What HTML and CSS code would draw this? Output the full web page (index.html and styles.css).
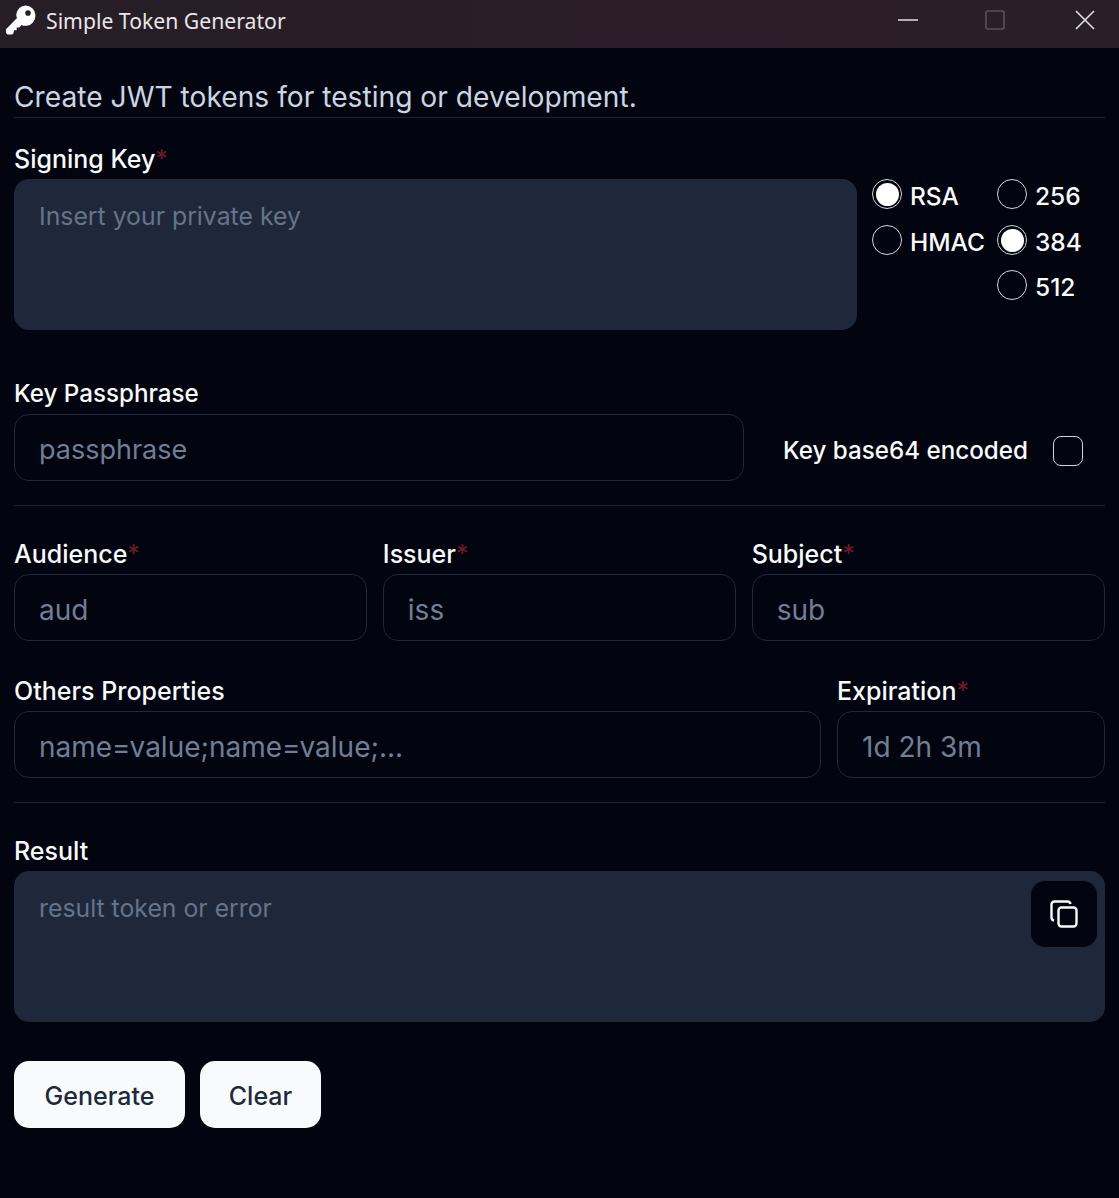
FILE: index.html
```html
<!DOCTYPE html>
<html lang="en">
<head>
<meta charset="utf-8">
<title>Simple Token Generator</title>
<link rel="stylesheet" href="styles.css">
</head>
<body>
<header class="titlebar">
  <svg class="app-icon" viewBox="0 0 32 32" aria-hidden="true">
    <path class="key" fill-rule="evenodd" d="M20.5 1.5a10.2 10.2 0 0 1 1.2 20.3c-2 .2-3.7 0-5.2-.8l-2.2 2.4h-2.6v2.8H9l-.6 3.2-1.3 1.1H2.6L1 28.9v-3.6l11-11.2c-.7-1.6-.9-3.200-.4-5A10 10 0 0 1 20.500 1.500zM23 6.200a2.800 2.800 0 1 0 0 5.600 2.800 2.800 0 0 0 0-5.600z"/>
  </svg>
  <span class="app-title">Simple Token Generator</span>
  <div class="window-controls">
    <svg class="ctl ctl-min" viewBox="0 0 20 20" aria-hidden="true"><path d="M0 10h20"/></svg>
    <svg class="ctl ctl-max" viewBox="0 0 20 20" aria-hidden="true"><rect x="1" y="1" width="18" height="18" rx="2"/></svg>
    <svg class="ctl ctl-close" viewBox="0 0 20 20" aria-hidden="true"><path d="M1 1l18 18M19 1L1 19"/></svg>
  </div>
</header>

<main class="content">
  <h1 class="lead">Create JWT tokens for testing or development.</h1>
  <hr class="rule rule-top">

  <section class="key-row">
    <div class="key-field">
      <label class="label">Signing Key<span class="req">*</span></label>
      <textarea class="area" placeholder="Insert your private key"></textarea>
    </div>
    <div class="algo">
      <label class="opt"><input type="radio" name="alg" checked><span>RSA</span></label>
      <label class="opt"><input type="radio" name="bits"><span>256</span></label>
      <label class="opt"><input type="radio" name="alg"><span>HMAC</span></label>
      <label class="opt"><input type="radio" name="bits" checked><span>384</span></label>
      <i></i>
      <label class="opt"><input type="radio" name="bits"><span>512</span></label>
    </div>
  </section>

  <section class="pass-row">
    <div class="pass-field">
      <label class="label label-tight">Key Passphrase</label>
      <input class="field field-tight" placeholder="passphrase">
    </div>
    <label class="b64"><span>Key base64 encoded</span><input type="checkbox"></label>
  </section>
  <hr class="rule rule-mid">

  <section class="three">
    <div><label class="label">Audience<span class="req">*</span></label><input class="field" placeholder="aud"></div>
    <div><label class="label">Issuer<span class="req">*</span></label><input class="field" placeholder="iss"></div>
    <div><label class="label">Subject<span class="req">*</span></label><input class="field" placeholder="sub"></div>
  </section>

  <section class="props">
    <div><label class="label">Others Properties</label><input class="field" placeholder="name=value;name=value;..."></div>
    <div><label class="label">Expiration<span class="req">*</span></label><input class="field" placeholder="1d 2h 3m"></div>
  </section>
  <hr class="rule rule-mid">

  <section class="result">
    <label class="label">Result</label>
    <div class="result-box">
      <textarea class="area" placeholder="result token or error"></textarea>
      <button class="copy" type="button" aria-label="Copy">
        <svg viewBox="0 0 28 28" aria-hidden="true">
          <rect x="8.500" y="7.500" width="18" height="19" rx="3"/>
          <path d="M4 20.500a3 3 0 0 1-2.500-3V4.500a3 3 0 0 1 3-3h13a3 3 0 0 1 3 2.500"/>
        </svg>
      </button>
    </div>
  </section>

  <div class="actions">
    <button class="btn btn-gen" type="button">Generate</button>
    <button class="btn btn-clear" type="button">Clear</button>
  </div>
</main>
</body>
</html>
```

FILE: styles.css
```css
* { box-sizing: border-box; }
html, body { margin: 0; height: 100%; }
body {
  background: #02040f;
  color: #f8fafc;
  font-family: Inter, "Noto Sans", sans-serif;
  overflow: hidden;
}
.titlebar {
  height: 48px;
  display: flex;
  align-items: center;
  background: linear-gradient(90deg, #261d25, #2b1e2a 60%, #2a1e28);
  padding: 0 0 8px 5px;
}
.app-icon { width: 32px; height: 32px; flex: none; }
.key { fill: #fff; }
.app-title {
  font-family: "Noto Sans", "Open Sans", sans-serif;
  font-size: 21.200px;
  color: #e8e6e8;
  margin-left: 9px;
  white-space: nowrap;
}
.window-controls { margin-left: auto; display: flex; align-items: center; }
.ctl { fill: none; stroke-width: 1.600; width: 20px; height: 20px; overflow: visible; }
.ctl-min { stroke: #d8d4d8; margin-right: 67px; }
.ctl-max { stroke: #5a525a; margin-right: 70px; }
.ctl-close { stroke: #e4e0e4; margin-right: 24px; }

.content { padding: 0 14px; }
.lead {
  margin: 29px 0 0;
  font-size: 28.200px;
  line-height: 40px;
  font-weight: 400;
  color: #cbd5e1;
  white-space: nowrap;
}
.rule { border: 0; height: 1px; background: #1c2433; margin: 0; }
.rule-mid { margin-top: 24px; }
.label {
  display: block;
  font-size: 25px;
  line-height: 30px;
  font-weight: 550;
  color: #f8fafc;
  white-space: nowrap;
  margin-bottom: 5px;
}
.label-tight { font-size: 24.200px; }
.req { color: #6d1a2a; font-weight: 400; }

.area {
  display: block;
  width: 100%;
  height: 151px;
  resize: none;
  border: 0;
  outline: 0;
  border-radius: 15px;
  background: #1f283b;
  padding: 19px 25px;
  font: 400 24.800px/36px Inter, "Noto Sans", sans-serif;
  color: #f8fafc;
}
.field {
  display: block;
  width: 100%;
  height: 67px;
  border: 1px solid #1e293b;
  border-radius: 15px;
  background: transparent;
  outline: 0;
  padding: 4px 24px 0;
  font: 400 28px Inter, "Noto Sans", sans-serif;
  color: #f8fafc;
}
.field-tight { font-size: 27px; }
.area::placeholder { color: #64748b; opacity: 1; }
.field::placeholder { color: #6f7f95; opacity: 1; }

.key-row { display: flex; margin-top: 26px; }
.key-field { width: 843px; flex: none; }
.algo {
  display: grid;
  grid-template-columns: 125px auto;
  grid-auto-rows: 45.500px;
  margin: 35px 0 0 15px;
  height: 137px;
}
.opt {
  display: flex;
  align-items: center;
  gap: 8px;
  height: 30px;
  font-size: 24.500px;
  font-weight: 550;
  line-height: 30px;
  white-space: nowrap;
}
.opt span { margin-top: 4px; }
input[type="radio"] {
  appearance: none;
  width: 30px;
  height: 30px;
  flex: none;
  margin: 0;
  border: 1.500px solid #d4d6da;
  border-radius: 50%;
  background: transparent;
}
input[type="radio"]:checked {
  background: #fff;
  background-clip: content-box;
  padding: 2.500px;
}

.pass-row { display: flex; margin-top: 49px; align-items: flex-start; }
.pass-field { width: 730px; flex: none; }
.b64 {
  display: flex;
  align-items: center;
  gap: 25px;
  margin: 57px 0 0 39px;
  font-size: 24.200px;
  font-weight: 550;
  line-height: 30px;
  white-space: nowrap;
}
input[type="checkbox"] {
  appearance: none;
  width: 30px;
  height: 30px;
  margin: 0;
  border: 1.500px solid #d4d6da;
  border-radius: 8px;
  background: transparent;
}

.three {
  display: grid;
  grid-template-columns: repeat(3, 1fr);
  gap: 15.500px;
  margin-top: 33px;
}
.props {
  display: grid;
  grid-template-columns: 807px 1fr;
  gap: 16px;
  margin-top: 35px;
}
.result { margin-top: 33px; }
.result-box { position: relative; }
.copy {
  position: absolute;
  top: 10px;
  right: 8px;
  width: 66px;
  height: 66px;
  border: 0;
  border-radius: 14px;
  background: #02040f;
  display: flex;
  align-items: center;
  justify-content: center;
  padding: 0;
}
.copy svg { width: 28px; height: 28px; fill: none; stroke: #f8fafc; stroke-width: 2.400; }

.actions { display: flex; gap: 15px; margin-top: 39px; }
.btn {
  height: 67px;
  border: 0;
  border-radius: 15px;
  background: #f8fafc;
  color: #1e293b;
  font: 500 25px Inter, "Noto Sans", sans-serif;
  padding: 2px 0 0;
}
.btn-gen { width: 171px; }
.btn-clear { width: 121px; }
```
